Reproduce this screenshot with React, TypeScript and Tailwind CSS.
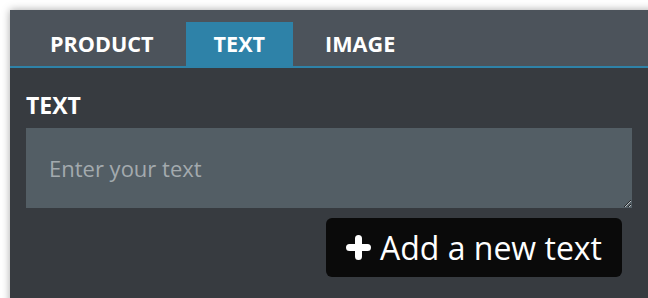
import { useState } from "react";

const tabs = ["PRODUCT", "TEXT", "IMAGE"];

function PlusIcon() {
  return (
    <svg width="25" height="25" viewBox="0 0 25 25" className="shrink-0">
      <path d="M12.5 3.5v18M3.5 12.5h18" stroke="white" strokeWidth="7" strokeLinecap="round" />
    </svg>
  );
}

export default function App() {
  const [active, setActive] = useState("TEXT");
  const [text, setText] = useState("");

  return (
    <div className="h-[298px] w-[648px] overflow-hidden bg-white pl-[10px] pt-[10px] font-['Open_Sans',sans-serif]">
      <div className="h-[300px] w-[660px] bg-[#373b40] shadow-[0_0_8px_rgba(0,0,0,0.35)]">
        <div className="flex h-[58px] items-end border-b-2 border-[#2e82a8] bg-[#4c535b] pl-[12px]">
          {tabs.map((t) => (
            <button
              key={t}
              onClick={() => setActive(t)}
              className={`mr-[4px] flex h-[44px] items-center px-[28px] text-[21.6px] font-bold text-white ${
                active === t ? "bg-[#2e82a8]" : ""
              }`}
            >
              {t}
            </button>
          ))}
        </div>
        <div className="w-[638px] px-4 pt-[22px]">
          <label htmlFor="txt" className="block text-[23px] leading-[30px] font-bold text-white">
            TEXT
          </label>
          <textarea
            id="txt"
            value={text}
            onChange={(e) => setText(e.target.value)}
            placeholder="Enter your text"
            className="mt-[8px] block h-[80px] w-full bg-[#535e65] px-[23px] py-[25px] text-[22px] leading-[30px] text-white placeholder:text-[#a3aaae] outline-none"
          />
          <div className="mt-[10px] flex justify-end pr-[10px]">
            <button className="flex h-[59px] items-center gap-[9px] rounded-[6px] bg-[#0a0a0a] pl-[20px] pr-[20px] text-[32px] text-white">
              <PlusIcon />
              Add a new text
            </button>
          </div>
        </div>
      </div>
    </div>
  );
}
